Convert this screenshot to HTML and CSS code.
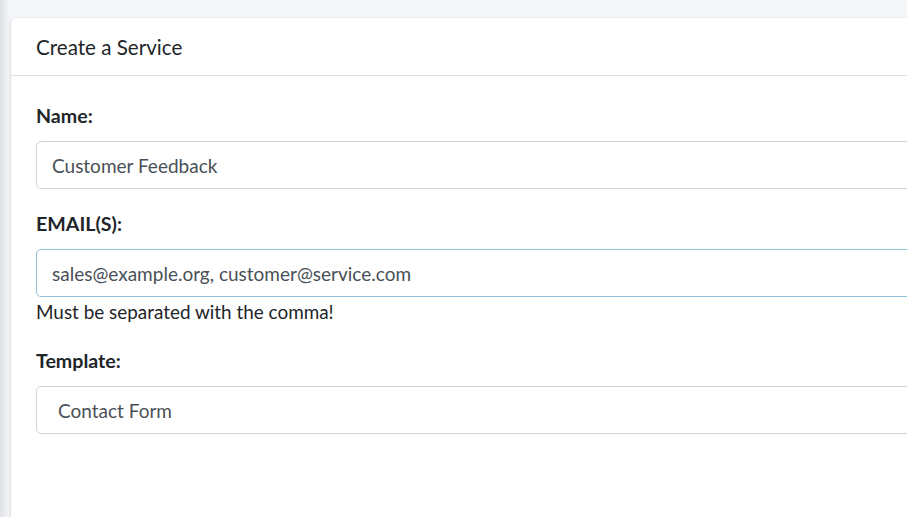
FILE: index.html
```html
<!DOCTYPE html>
<html lang="en">
<head>
<meta charset="utf-8">
<title>Create a Service</title>
<link rel="stylesheet" href="styles.css">
</head>
<body>
<div class="content">
  <div class="card">
    <div class="card-header">
      <h3 class="card-title">Create a Service</h3>
    </div>
    <div class="card-body">
      <div class="form-group">
        <label class="label" for="name">Name:</label>
        <input class="form-control" id="name" type="text" value="Customer Feedback">
      </div>
      <div class="form-group">
        <label class="label" for="emails">EMAIL(S):</label>
        <input class="form-control focused" id="emails" type="text" value="sales@example.org, customer@service.com">
        <div class="help">Must be separated with the comma!</div>
      </div>
      <div class="form-group">
        <label class="label" for="template">Template:</label>
        <select class="form-control select" id="template">
          <option>Contact Form</option>
        </select>
      </div>
    </div>
  </div>
</div>
</body>
</html>
```

FILE: styles.css
```css
html, body {
  margin: 0;
  padding: 0;
  height: 100%;
  overflow: hidden;
}
body {
  background: linear-gradient(to right, #dfe1e5 0, #eceef2 6px, #f4f6f9 10px);
  font-family: "Lato", "Noto Sans", sans-serif;
  color: #212529;
}
.content {
  padding: 18px 0 0 11px;
}
.card {
  width: 1100px;
  min-height: 600px;
  background: #fff;
  border-radius: 5px;
  box-shadow: 0 0 1px rgba(0,0,0,.125), 0 1px 3px rgba(0,0,0,.2);
}
.card-header {
  padding: 16px 25px 14px;
  border-bottom: 1px solid rgba(0,0,0,.125);
}
.card-title {
  margin: 0;
  font-size: 20.6px;
  font-weight: 400;
  line-height: 27px;
}
.card-body {
  padding: 25px 25px;
}
.form-group {
  margin-bottom: 20px;
  display: flex;
  flex-direction: column;
}
.label {
  font-weight: 700;
  font-size: 19.6px;
  line-height: 30px;
  margin-bottom: 10px;
}
.form-control {
  box-sizing: border-box;
  width: 100%;
  height: 48px;
  padding: 0 15px;
  font-family: inherit;
  font-size: 19px;
  color: #495057;
  background: #fff;
  border: 1px solid #ced4da;
  border-radius: 5px;
  outline: none;
}
.focused {
  border-color: #91c1d9;
}
.select {
  appearance: none;
  -webkit-appearance: none;
  padding-left: 21px;
}
.help {
  font-size: 18.9px;
  line-height: 29px;
}
```
